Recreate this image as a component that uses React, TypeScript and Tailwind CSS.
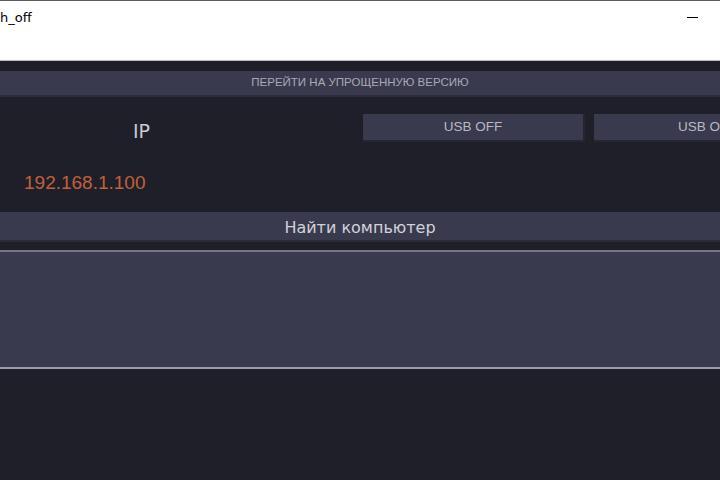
export default function App() {
  return (
    <div className="w-[720px] h-[480px] overflow-hidden bg-[#1e1f29] font-['Liberation_Sans',sans-serif]">
      <header className="h-[61px] bg-white border-t border-[#5c5c5c] border-b border-b-[#bdbdbd] flex justify-between">
        <span className="text-[13px] text-black mt-[10px] leading-none font-['DejaVu_Sans',sans-serif]">h_off</span>
        <span className="w-[11px] h-px bg-black mt-[16px] mr-[22px]"></span>
      </header>

      <div className="pt-[10px]">
        <div className="h-[26px] bg-[#3a3a4e] border-b-2 border-[#2c2c3b] flex items-center justify-center">
          <span className="text-[11.5px] text-[#a9a9b4]">
            ПЕРЕЙТИ НА УПРОЩЕННУЮ ВЕРСИЮ
          </span>
        </div>

        <div className="h-[115px] flex">
          <div className="w-[290px] shrink-0 flex flex-col">
            <span className="mt-[25px] ml-[133px] text-[19px] text-[#c9c9d2] leading-none font-['DejaVu_Sans',sans-serif]">
              IP
            </span>
            <span className="mt-[32px] ml-[24px] text-[19px] text-[#c2603c] leading-none">
              192.168.1.100
            </span>
          </div>
          <div className="flex shrink-0 gap-[9px] ml-[73px] mt-[17px] h-[28px]">
            <button className="w-[222px] shrink-0 h-full bg-[#3a3a4e] border-b-2 border-r-2 border-[#262633] text-[13.5px] text-[#b9b9c3]">
              USB OFF
            </button>
            <button className="w-[222px] shrink-0 h-full bg-[#3a3a4e] border-b-2 border-r-2 border-[#262633] text-[13.5px] text-[#b9b9c3]">
              USB ON
            </button>
          </div>
        </div>

        <div className="h-[30px] pt-[3px] bg-[#3a3a4e] border-b-2 border-[#2a2a38] flex items-center justify-center">
          <span className="text-[16px] text-[#d2d2da] leading-none font-['DejaVu_Sans',sans-serif]">Найти компьютер</span>
        </div>

        <div className="mt-[8px] h-[119px] bg-[#3a3a4e] border-t-2 border-[#74748a] border-b-2 border-b-[#9c9cad]"></div>
      </div>
    </div>
  );
}
